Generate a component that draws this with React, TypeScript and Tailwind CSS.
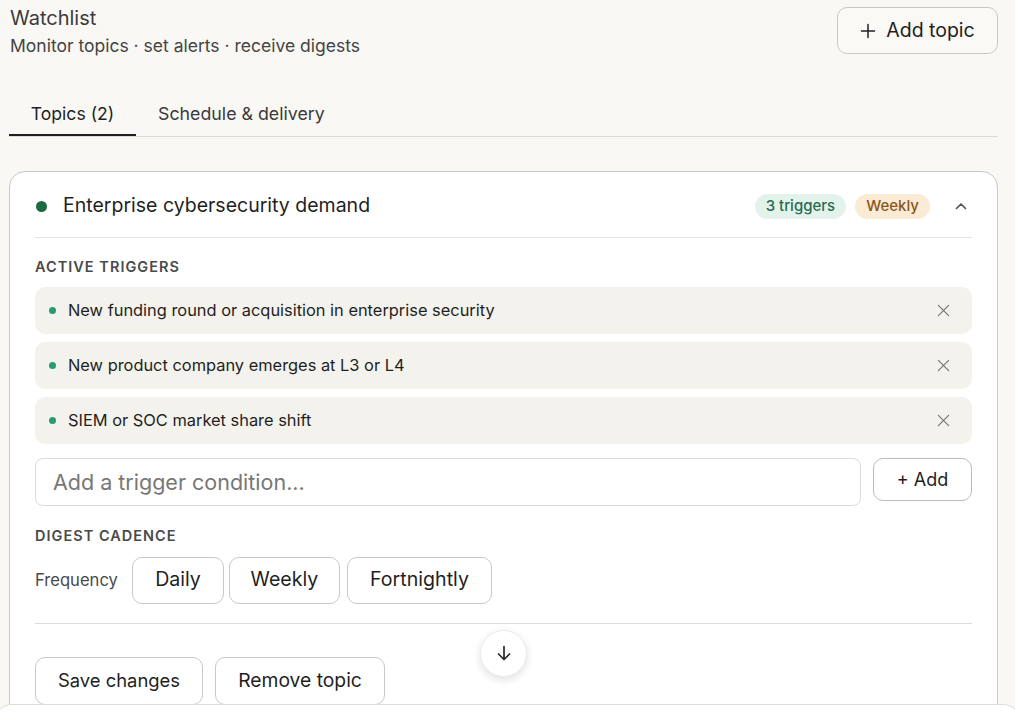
import React from "react";

const triggers = [
  "New funding round or acquisition in enterprise security",
  "New product company emerges at L3 or L4",
  "SIEM or SOC market share shift",
];

function XIcon() {
  return (
    <svg width="13" height="13" viewBox="0 0 14 14" fill="none" stroke="#777" strokeWidth="1.3" strokeLinecap="round">
      <path d="M1.5 1.5l11 11M12.5 1.5l-11 11" />
    </svg>
  );
}

export default function App() {
  return (
    <div
      className="relative min-h-[713px] bg-[#f9f8f5] text-[#1f1f1f] overflow-hidden"
      style={{ fontFamily: "Inter, 'Noto Sans', sans-serif" }}
    >
      <div className="px-[9px]">
        {/* Page header */}
        <div className="flex items-start justify-between pt-[4px]">
          <div className="pl-[1px]">
            <h1 className="text-[20px] leading-[28px] text-[#3b3b3b] font-normal">Watchlist</h1>
            <p className="text-[17.5px] leading-[24px] text-[#444] mt-[2px]">
              Monitor topics · set alerts · receive digests
            </p>
          </div>
          <button className="mt-[3px] mr-[8px] h-[47px] w-[161px] rounded-[10px] border border-[#c9c8c3] bg-[#faf9f6] flex items-center justify-center gap-[10px] text-[19.5px] text-[#1f1f1f]">
            <svg width="16" height="16" viewBox="0 0 16 16" fill="none" stroke="#222" strokeWidth="1.5" strokeLinecap="round">
              <path d="M8 1.5v13M1.5 8h13" />
            </svg>
            <span>Add topic</span>
          </button>
        </div>

        {/* Tabs */}
        <div className="mt-[43px] mr-[8px] flex border-b border-[#dcdbd6]">
          <div className="w-[127px] h-[35px] flex items-start justify-center text-[17.6px] text-[#1f1f1f] border-b-2 border-[#1f1f1f] -mb-[1px]">
            Topics (2)
          </div>
          <div className="pl-[22px] h-[35px] text-[17.8px] text-[#3b3b3b]">Schedule &amp; delivery</div>
        </div>

        {/* Topic card */}
        <div className="mt-[34px] mr-[8px] rounded-[16px] border border-[#c9c8c3] bg-white px-[25px] pb-[20px]">
          <div className="h-[66px] pt-[3px] flex items-center border-b border-[#e3e2dd]">
            <span className="ml-[1px] w-[11px] h-[11px] rounded-full bg-[#1c6a42]" />
            <span className="ml-[16px] text-[19.5px] text-[#1f1f1f]">Enterprise cybersecurity demand</span>
            <div className="ml-auto flex items-center gap-[9px]">
              <span className="h-[25px] px-[11px] rounded-full bg-[#e3f3ec] text-[#2b6b50] text-[15px] font-medium flex items-center">
                3 triggers
              </span>
              <span className="h-[25px] px-[11px] rounded-full bg-[#fbebd5] text-[#8a5718] text-[15px] font-medium flex items-center">
                Weekly
              </span>
              <svg className="ml-[14px] mr-[3px]" width="16" height="16" viewBox="0 0 16 16" fill="none" stroke="#555" strokeWidth="1.7" strokeLinecap="round" strokeLinejoin="round">
                <path d="M3.5 10.5L8 6l4.5 4.5" />
              </svg>
            </div>
          </div>

          <div className="mt-[18px] text-[14.5px] font-semibold tracking-[0.07em] text-[#4a4a4a]">ACTIVE TRIGGERS</div>

          <div className="mt-[9px] flex flex-col gap-[8px]">
            {triggers.map((t) => (
              <div key={t} className="h-[47px] rounded-[10px] bg-[#f3f2ec] flex items-center pl-[14px] pr-[22px]">
                <span className="w-[7px] h-[7px] rounded-full bg-[#2a9a70]" />
                <span className="ml-[12px] text-[16.4px] text-[#1f1f1f]">{t}</span>
                <span className="ml-auto flex">
                  <XIcon />
                </span>
              </div>
            ))}
          </div>

          <div className="mt-[14px] flex items-start gap-[12px]">
            <div className="flex-1 h-[48px] rounded-[8px] border border-[#dcdbd6] bg-white flex items-center pl-[17px] text-[21.5px] text-[#777]">
              Add a trigger condition...
            </div>
            <button className="w-[99px] h-[43px] rounded-[10px] border border-[#bdbcb7] bg-white text-[18px] text-[#1f1f1f]">
              + Add
            </button>
          </div>

          <div className="mt-[19px] text-[14.5px] font-semibold tracking-[0.07em] text-[#4a4a4a]">DIGEST CADENCE</div>

          <div className="mt-[10px] flex items-center">
            <span className="text-[16.6px] text-[#4a4a4a] w-[97px]">Frequency</span>
            <div className="flex gap-[5px]">
              {[
                ["Daily", "w-[92px]"],
                ["Weekly", "w-[111px]"],
                ["Fortnightly", "w-[145px] ml-[2px]"],
              ].map(([label, w]) => (
                <button
                  key={label}
                  className={`${w} h-[47px] rounded-[10px] border border-[#c9c8c3] bg-white text-[19.6px] text-[#1f1f1f]`}
                >
                  {label}
                </button>
              ))}
            </div>
          </div>

          <div className="mt-[19px] border-t border-[#dcdbd6]" />

          <div className="relative mt-[33px] flex gap-[12px]">
            <button className="w-[168px] h-[48px] rounded-[10px] border border-[#c9c8c3] bg-white text-[18.4px] text-[#1f1f1f]">
              Save changes
            </button>
            <button className="w-[170px] h-[48px] rounded-[10px] border border-[#c9c8c3] bg-white text-[19.3px] text-[#1f1f1f]">
              Remove topic
            </button>
            {/* Scroll-to-bottom button */}
            <button className="absolute left-[445px] -top-[27px] w-[47px] h-[47px] rounded-full bg-white border border-[#ecebe7] shadow-[0_3px_8px_rgba(0,0,0,0.12)] flex items-center justify-center">
              <svg width="20" height="20" viewBox="0 0 20 20" fill="none" stroke="#2a2a2a" strokeWidth="1.7" strokeLinecap="round" strokeLinejoin="round">
                <path d="M10 3.5v13M4.5 11L10 16.5 15.5 11" />
              </svg>
            </button>
          </div>
        </div>
      </div>

      {/* Composer panel peeking in at the bottom */}
      <div className="absolute -left-[6px] -right-[6px] top-[704px] h-[40px] rounded-t-[18px] border border-[#dcdbd6] bg-white" />
    </div>
  );
}
